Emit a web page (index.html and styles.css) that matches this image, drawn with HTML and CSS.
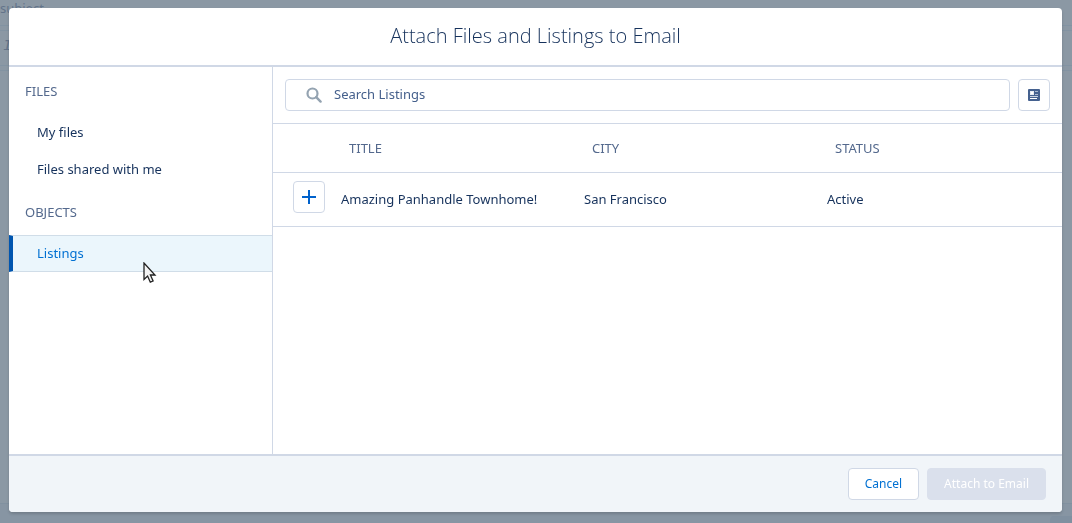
FILE: index.html
```html
<!DOCTYPE html>
<html lang="en">
<head>
    <meta charset="UTF-8">
    <meta name="viewport" content="width=device-width, initial-scale=1.0">
    <title>Attach Files and Listings to Email</title>
    <link rel="stylesheet" href="styles.css">
</head>
<body>
    <!-- email composer, dimmed behind the dialog -->
    <div class="composer" aria-hidden="true">
        <div class="composer-subject">subject</div>
        <div class="composer-toolbar"><i>I</i></div>
        <div class="composer-body"></div>
        <div class="composer-footer"><span class="composer-send"></span></div>
    </div>

    <div class="overlay">
        <section class="modal" role="dialog" aria-labelledby="modal-title">
            <header class="modal-header">
                <h1 id="modal-title">Attach Files and Listings to Email</h1>
            </header>

            <div class="modal-content">
                <nav class="sidebar">
                    <h2>FILES</h2>
                    <a href="#my-files" class="nav-item">My files</a>
                    <a href="#shared" class="nav-item">Files shared with me</a>
                    <h2>OBJECTS</h2>
                    <a href="#listings" class="nav-item active">Listings</a>
                </nav>

                <main class="panel">
                    <div class="search-bar">
                        <label class="search-box">
                            <svg class="search-icon" viewBox="0 0 16 16" aria-hidden="true">
                                <circle cx="6.5" cy="6.5" r="5" fill="none" stroke="currentColor" stroke-width="2.2"/>
                                <path d="M10.2 10.2l4.4 4.4" stroke="currentColor" stroke-width="2.4" stroke-linecap="round"/>
                            </svg>
                            <input type="search" placeholder="Search Listings" aria-label="Search Listings">
                        </label>
                        <button type="button" class="btn-icon" aria-label="Show details">
                            <svg width="12" height="12" viewBox="0 0 12 12">
                                <rect width="12" height="12" rx="1" fill="#45618f"/>
                                <rect x="2" y="2" width="4" height="4" fill="#e6ebf3"/>
                                <rect x="3" y="3" width="2" height="2" fill="#fff"/>
                                <path d="M7 2.5h3M7 5.5h3" stroke="#a9b8d0"/>
                                <path d="M2 7.5h8" stroke="#c9d3e2"/>
                                <path d="M2 9.5h7" stroke="#fff"/>
                            </svg>
                        </button>
                    </div>

                    <table class="listings">
                        <thead>
                            <tr>
                                <td class="col-add"></td>
                                <th scope="col">TITLE</th>
                                <th scope="col">CITY</th>
                                <th scope="col">STATUS</th>
                            </tr>
                        </thead>
                        <tbody>
                            <tr>
                                <td class="col-add">
                                    <button type="button" class="btn-icon" aria-label="Add listing">
                                        <svg width="14" height="14" viewBox="0 0 14 14">
                                            <path d="M7 0v14M0 7h14" stroke="#0062cc" stroke-width="2"/>
                                        </svg>
                                    </button>
                                </td>
                                <td>Amazing Panhandle Townhome!</td>
                                <td>San Francisco</td>
                                <td>Active</td>
                            </tr>
                        </tbody>
                    </table>
                </main>
            </div>

            <footer class="modal-footer">
                <button type="button" class="btn">Cancel</button>
                <button type="button" class="btn btn-primary" disabled>Attach to Email</button>
            </footer>
        </section>
    </div>

    <svg class="cursor" width="14" height="22" viewBox="0 0 14 22" aria-hidden="true">
        <path d="M1 1v16.5l3.6-3.4 2.7 6.1 2.8-1.2-2.7-6H12z" fill="#f4f4f4" stroke="#222" stroke-width="1.3"/>
    </svg>
</body>
</html>
```

FILE: styles.css
```css
* {
    box-sizing: border-box;
}

body {
    margin: 0;
    font-family: "Noto Sans", "Open Sans", sans-serif;
    font-size: 13px;
    line-height: 20px;
    color: #16325c;
    background: #8b98a4;
}

h1, h2 {
    margin: 0;
    font-weight: 400;
}

a {
    text-decoration: none;
}

button, input {
    font: inherit;
}

svg {
    display: block;
}

/* Page behind the dialog */
.composer {
    display: flex;
    flex-direction: column;
    height: 100vh;
    overflow: hidden;
    color: #63748a;
}

.composer-subject {
    height: 26px;
    border-bottom: 1px solid #8293a2;
    line-height: 16px;
}

.composer-toolbar {
    height: 36px;
    margin-top: 4px;
    padding: 6px 3px;
    border-top: 1px solid #8293a2;
    border-bottom: 1px solid #8293a2;
    font-family: "Liberation Mono", monospace;
    font-size: 15px;
}

.composer-body {
    flex: 1;
    margin-top: 4px;
    border-top: 1px solid #8293a2;
    border-bottom: 1px solid #8191a0;
}

.composer-footer {
    display: flex;
    justify-content: flex-end;
    height: 19px;
    padding-top: 12px;
    background: #8795a3;
}

.composer-send {
    width: 22px;
    border-radius: 4px 0 0 0;
    background: #8090a0;
}

/* Dialog */
.overlay {
    position: fixed;
    inset: 0;
    display: flex;
    padding: 8px 10px 11px 9px;
}

.modal {
    flex: 1;
    display: flex;
    flex-direction: column;
    min-width: 0;
    border-radius: 4px;
    overflow: hidden;
    background: #fff;
    box-shadow: 0 2px 3px rgba(0, 0, 0, 0.16);
}

.modal-header {
    padding: 14px 16px 15px;
    border-bottom: 2px solid #d0d8e6;
    text-align: center;
}

.modal-header h1 {
    font-family: "Open Sans", "Noto Sans", sans-serif;
    font-size: 20px;
    font-weight: 300;
    line-height: 28px;
}

.modal-content {
    flex: 1;
    display: flex;
    min-height: 0;
}

.sidebar {
    flex: 0 0 264px;
    border-right: 1px solid #d0d8e6;
}

.sidebar h2 {
    padding: 14px 16px 13px;
    font-size: 13px;
    line-height: 20px;
    color: #54698d;
}

.nav-item {
    display: block;
    padding: 7px 24px 8px;
    border: solid transparent;
    border-width: 1px 0 1px 4px;
    color: #16325c;
}

.nav-item.active {
    border-color: #d0dde8;
    border-left-color: #0055af;
    background: #ebf6fc;
    color: #0070d2;
}

.panel {
    flex: 1;
    min-width: 0;
}

.search-bar {
    display: flex;
    gap: 8px;
    padding: 12px;
    border-bottom: 1px solid #d0d8e6;
}

.search-box {
    flex: 1;
    display: flex;
    align-items: center;
    gap: 12px;
    height: 32px;
    padding: 0 20px;
    border: 1px solid #d0d8e6;
    border-radius: 4px;
}

.search-icon {
    width: 16px;
    height: 16px;
    color: #94a3b1;
}

.search-box input {
    flex: 1;
    height: 20px;
    padding: 0 0 2px;
    border: 0;
    outline: 0;
    background: none;
}

.search-box input::placeholder {
    color: #45608c;
    opacity: 1;
}

.btn-icon {
    display: flex;
    align-items: center;
    justify-content: center;
    width: 32px;
    height: 32px;
    padding: 0;
    border: 1px solid #d0d8e6;
    border-radius: 4px;
    background: #fff;
}

.listings {
    width: 100%;
    table-layout: fixed;
    border-collapse: collapse;
}

.listings th {
    height: 48px;
    padding: 0 16px;
    font-weight: 400;
    text-align: left;
    color: #54698d;
}

.listings td {
    height: 54px;
    padding: 0 8px;
}

.listings thead td {
    height: 48px;
}

.listings tr {
    border-bottom: 1px solid #d0d8e6;
}

.listings .col-add {
    width: 60px;
    padding: 8px 8px 8px 20px;
    vertical-align: top;
}

.modal-footer {
    display: flex;
    justify-content: flex-end;
    gap: 8px;
    padding: 12px 16px;
    border-top: 2px solid #d0d8e6;
    background: #f1f5f9;
}

.btn {
    height: 32px;
    padding: 0 16px;
    border: 1px solid #d0d8e6;
    border-radius: 4px;
    background: #fff;
    font-size: 12px;
    color: #0070d2;
}

.btn-primary {
    border-color: #dae0ec;
    background: #dae0ec;
    color: #fff;
}

.cursor {
    position: absolute;
    top: 262px;
    left: 143px;
}
```
